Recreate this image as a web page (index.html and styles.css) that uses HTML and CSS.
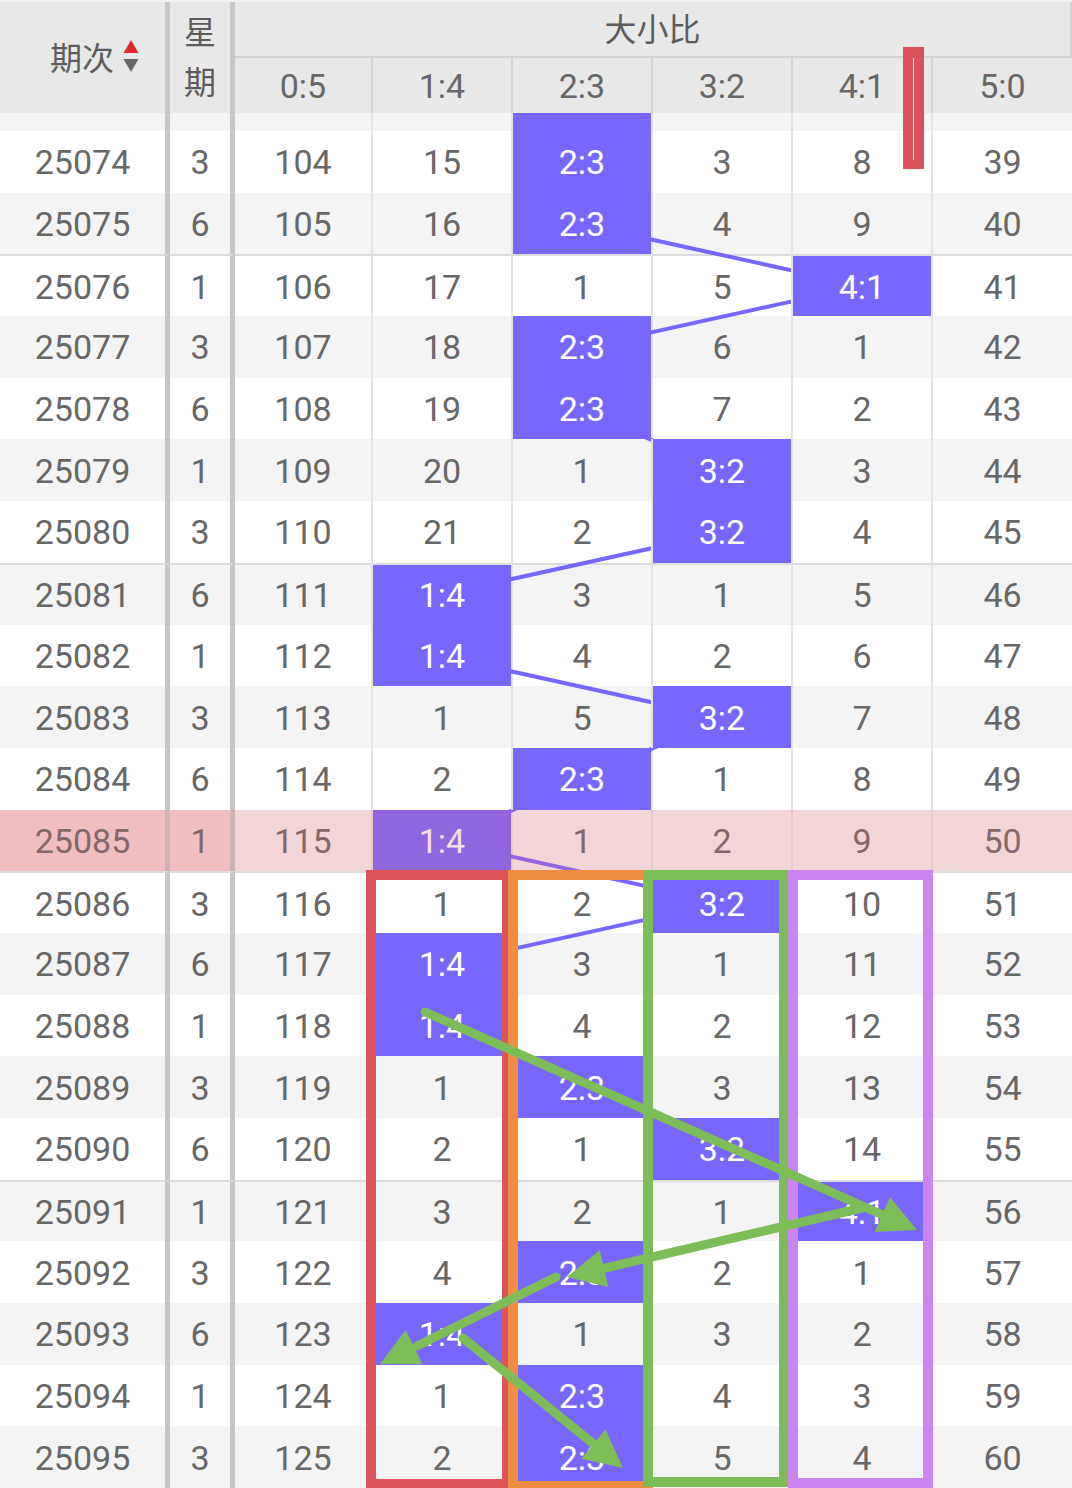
FILE: index.html
```html
<!DOCTYPE html>
<html lang="zh">
<head>
<meta charset="utf-8">
<title>大小比走势</title>
<link rel="stylesheet" href="styles.css">
</head>
<body>
<div class="sheet">
  <div class="head">
    <div class="h-id"><span class="h-id-text">期次</span><svg class="sort" width="16" height="34" viewBox="0 0 16 34"><polygon points="0.5,14 8,1 15.5,14" fill="#e5282b"/><polygon points="0.5,20 15.5,20 8,33" fill="#666"/></svg></div>
    <div class="h-wk">星期</div>
    <div class="h-grp">大小比</div>
    <div class="h-r">0:5</div>
    <div class="h-r d">1:4</div>
    <div class="h-r d">2:3</div>
    <div class="h-r d">3:2</div>
    <div class="h-r d">4:1</div>
    <div class="h-r d">5:0</div>
  </div>

  <div class="body">
    <div class="row alt first"><div class="c id">25073</div><div class="c wk">1</div><div class="c">103</div><div class="c d">14</div><div class="c d hit">2:3</div><div class="c d">2</div><div class="c d">7</div><div class="c d">38</div></div>
    <div class="row"><div class="c id">25074</div><div class="c wk">3</div><div class="c">104</div><div class="c d">15</div><div class="c d hit">2:3</div><div class="c d">3</div><div class="c d">8</div><div class="c d">39</div></div>
    <div class="row alt"><div class="c id">25075</div><div class="c wk">6</div><div class="c">105</div><div class="c d">16</div><div class="c d hit">2:3</div><div class="c d">4</div><div class="c d">9</div><div class="c d">40</div></div>
    <div class="row sep"><div class="c id">25076</div><div class="c wk">1</div><div class="c">106</div><div class="c d">17</div><div class="c d">1</div><div class="c d">5</div><div class="c d hit">4:1</div><div class="c d">41</div></div>
    <div class="row alt"><div class="c id">25077</div><div class="c wk">3</div><div class="c">107</div><div class="c d">18</div><div class="c d hit">2:3</div><div class="c d">6</div><div class="c d">1</div><div class="c d">42</div></div>
    <div class="row"><div class="c id">25078</div><div class="c wk">6</div><div class="c">108</div><div class="c d">19</div><div class="c d hit">2:3</div><div class="c d">7</div><div class="c d">2</div><div class="c d">43</div></div>
    <div class="row alt"><div class="c id">25079</div><div class="c wk">1</div><div class="c">109</div><div class="c d">20</div><div class="c d">1</div><div class="c d hit">3:2</div><div class="c d">3</div><div class="c d">44</div></div>
    <div class="row"><div class="c id">25080</div><div class="c wk">3</div><div class="c">110</div><div class="c d">21</div><div class="c d">2</div><div class="c d hit">3:2</div><div class="c d">4</div><div class="c d">45</div></div>
    <div class="row alt sep"><div class="c id">25081</div><div class="c wk">6</div><div class="c">111</div><div class="c d hit">1:4</div><div class="c d">3</div><div class="c d">1</div><div class="c d">5</div><div class="c d">46</div></div>
    <div class="row"><div class="c id">25082</div><div class="c wk">1</div><div class="c">112</div><div class="c d hit">1:4</div><div class="c d">4</div><div class="c d">2</div><div class="c d">6</div><div class="c d">47</div></div>
    <div class="row alt"><div class="c id">25083</div><div class="c wk">3</div><div class="c">113</div><div class="c d">1</div><div class="c d">5</div><div class="c d hit">3:2</div><div class="c d">7</div><div class="c d">48</div></div>
    <div class="row"><div class="c id">25084</div><div class="c wk">6</div><div class="c">114</div><div class="c d">2</div><div class="c d hit">2:3</div><div class="c d">1</div><div class="c d">8</div><div class="c d">49</div></div>
    <div class="row alt cur"><div class="c id">25085</div><div class="c wk">1</div><div class="c">115</div><div class="c d hit">1:4</div><div class="c d">1</div><div class="c d">2</div><div class="c d">9</div><div class="c d">50</div></div>
    <div class="row sep"><div class="c id">25086</div><div class="c wk">3</div><div class="c">116</div><div class="c d">1</div><div class="c d">2</div><div class="c d hit">3:2</div><div class="c d">10</div><div class="c d">51</div></div>
    <div class="row alt"><div class="c id">25087</div><div class="c wk">6</div><div class="c">117</div><div class="c d hit">1:4</div><div class="c d">3</div><div class="c d">1</div><div class="c d">11</div><div class="c d">52</div></div>
    <div class="row"><div class="c id">25088</div><div class="c wk">1</div><div class="c">118</div><div class="c d hit">1:4</div><div class="c d">4</div><div class="c d">2</div><div class="c d">12</div><div class="c d">53</div></div>
    <div class="row alt"><div class="c id">25089</div><div class="c wk">3</div><div class="c">119</div><div class="c d">1</div><div class="c d hit">2:3</div><div class="c d">3</div><div class="c d">13</div><div class="c d">54</div></div>
    <div class="row"><div class="c id">25090</div><div class="c wk">6</div><div class="c">120</div><div class="c d">2</div><div class="c d">1</div><div class="c d hit">3:2</div><div class="c d">14</div><div class="c d">55</div></div>
    <div class="row alt sep"><div class="c id">25091</div><div class="c wk">1</div><div class="c">121</div><div class="c d">3</div><div class="c d">2</div><div class="c d">1</div><div class="c d hit">4:1</div><div class="c d">56</div></div>
    <div class="row"><div class="c id">25092</div><div class="c wk">3</div><div class="c">122</div><div class="c d">4</div><div class="c d hit">2:3</div><div class="c d">2</div><div class="c d">1</div><div class="c d">57</div></div>
    <div class="row alt"><div class="c id">25093</div><div class="c wk">6</div><div class="c">123</div><div class="c d hit">1:4</div><div class="c d">1</div><div class="c d">3</div><div class="c d">2</div><div class="c d">58</div></div>
    <div class="row"><div class="c id">25094</div><div class="c wk">1</div><div class="c">124</div><div class="c d">1</div><div class="c d hit">2:3</div><div class="c d">4</div><div class="c d">3</div><div class="c d">59</div></div>
    <div class="row alt"><div class="c id">25095</div><div class="c wk">3</div><div class="c">125</div><div class="c d">2</div><div class="c d hit">2:3</div><div class="c d">5</div><div class="c d">4</div><div class="c d">60</div></div>
  </div>

  <svg class="trend" width="1072" height="1488" viewBox="0 0 1072 1488">
    <polyline fill="none" stroke="#7867fe" stroke-width="4" stroke-linejoin="round"
      points="582,162.5 582,224.2 862,285.9 582,347.6 582,409.3 722,471 722,532.7 442,594.4 442,656.1 722,717.8 582,779.5 442,841.2 722,902.9 442,964.6 442,1026.3 582,1088 722,1149.7 862,1211.4 582,1273.1 442,1334.8 582,1396.5 582,1458.2"/>
  </svg>

  <div class="box red"></div>
  <div class="box orange"></div>
  <div class="box green"></div>
  <div class="box violet"></div>

  <svg class="arrows" width="1072" height="1488" viewBox="0 0 1072 1488">
    <g stroke="#7dbd58" stroke-width="9" stroke-linecap="round" fill="none">
      <line x1="425" y1="1012" x2="885" y2="1216"/>
      <line x1="862" y1="1208" x2="601" y2="1269"/>
      <line x1="556" y1="1277" x2="417" y2="1346"/>
      <line x1="463" y1="1338" x2="596" y2="1446"/>
    </g>
    <g fill="#7dbd58">
      <polygon points="917,1230 874.6,1232 890,1197.2"/>
      <polygon points="567,1277 599.7,1249.9 608.3,1286.9"/>
      <polygon points="380,1364 405.7,1330.1 422.5,1364.2"/>
      <polygon points="623,1468 581.5,1458.8 605.5,1429.3"/>
    </g>
  </svg>

  <div class="marker"></div>
</div>
</body>
</html>
```

FILE: styles.css
```css
* {
  box-sizing: border-box;
  margin: 0;
  padding: 0;
}

html, body {
  background: #fff;
}

body {
  margin: 0;
  font-family: Roboto, "Noto Sans CJK SC", sans-serif;
  color: #676767;
}

.sheet {
  position: relative;
  width: 1072px;
  height: 1488px;
  overflow: hidden;
}

/* ---------- header ---------- */
.head {
  position: relative;
  z-index: 6;
  display: grid;
  grid-template-columns: 170px 65px 136px 140px 140px 140px 140px 141px;
  grid-template-rows: 54px 57px;
  height: 113px;
  background: #e8e8e8;
  border-top: 2px solid #f2f2f2;
  color: #5c5c5c;
}

.h-id {
  grid-row: 1 / 3;
  grid-column: 1;
  display: flex;
  align-items: center;
  justify-content: center;
  padding-left: 24px;
  padding-bottom: 4px;
  border-right: 5px solid #c6c6c6;
  font-family: "Noto Sans CJK SC", sans-serif;
  font-size: 32px;
}

.h-id-text {
  line-height: 1;
}

.sort {
  margin-left: 9px;
  flex: none;
}

.h-wk {
  grid-row: 1 / 3;
  grid-column: 2;
  display: flex;
  align-items: center;
  justify-content: center;
  text-align: center;
  border-right: 5px solid #c6c6c6;
  font-family: "Noto Sans CJK SC", sans-serif;
  font-size: 32px;
  line-height: 50px;
  word-break: break-all;
  padding: 0 6px 5px;
}

.h-grp {
  grid-row: 1;
  grid-column: 3 / 9;
  display: flex;
  align-items: center;
  justify-content: center;
  padding-bottom: 4px;
  font-family: "Noto Sans CJK SC", sans-serif;
  font-size: 32px;
  border-right: 2px solid #d3d3d3;
}

.h-r {
  grid-row: 2;
  display: flex;
  align-items: center;
  justify-content: center;
  border-top: 2px solid #d3d3d3;
  font-size: 34px;
  color: #676767;
}

.h-r.d {
  border-left: 2px solid #d3d3d3;
}

/* ---------- body ---------- */
.body {
  height: 1375px;
  overflow: hidden;
}

.row {
  display: grid;
  grid-template-columns: 170px 65px 136px 140px 140px 140px 140px 141px;
  height: 61.7px;
  background: #fff;
}

.row.first {
  margin-top: -43.7px;
}

.row.alt {
  background: #f4f4f4;
}

.c {
  display: flex;
  align-items: center;
  justify-content: center;
  padding-top: 1px;
  font-size: 34px;
  line-height: 1;
  color: #676767;
}

.c.id,
.c.wk {
  border-right: 5px solid #c6c6c6;
}

.c.d {
  border-left: 2px solid #e4e4e4;
}

.row.sep .c {
  border-top: 2px solid #dcdcdc;
}

.hit {
  position: relative;
  z-index: 2;
  background: #7867fe;
  color: #fff;
}

.row.cur {
  position: relative;
}

.row.cur .c.id,
.row.cur .c.wk {
  background: #f2d6d8;
}

.row.cur::after {
  content: "";
  position: absolute;
  inset: 0;
  z-index: 3;
  background: rgba(234, 106, 116, 0.22);
  pointer-events: none;
}

/* ---------- overlays ---------- */
.trend {
  position: absolute;
  left: 0;
  top: 0;
  z-index: 1;
  pointer-events: none;
}

.box {
  position: absolute;
  z-index: 4;
  top: 870px;
  pointer-events: none;
}

.box.red {
  left: 366px;
  width: 146px;
  height: 619px;
  border: 10px solid #dc535a;
}

.box.orange {
  left: 508px;
  width: 145px;
  height: 621px;
  border: 10px solid #ee8e42;
}

.box.green {
  left: 643px;
  width: 146px;
  height: 617px;
  border: 10px solid #7dbd58;
}

.box.violet {
  left: 788px;
  width: 145px;
  height: 618px;
  border: 10px solid #cc84f2;
}

.arrows {
  position: absolute;
  left: 0;
  top: 0;
  z-index: 5;
  pointer-events: none;
}

.marker {
  position: absolute;
  left: 903px;
  top: 47px;
  width: 21px;
  height: 122px;
  z-index: 7;
  background: #d9525a;
}

.marker::after {
  content: "";
  position: absolute;
  left: 10px;
  top: 11px;
  bottom: 9px;
  width: 1px;
  background: rgba(255, 255, 255, 0.85);
}
```
